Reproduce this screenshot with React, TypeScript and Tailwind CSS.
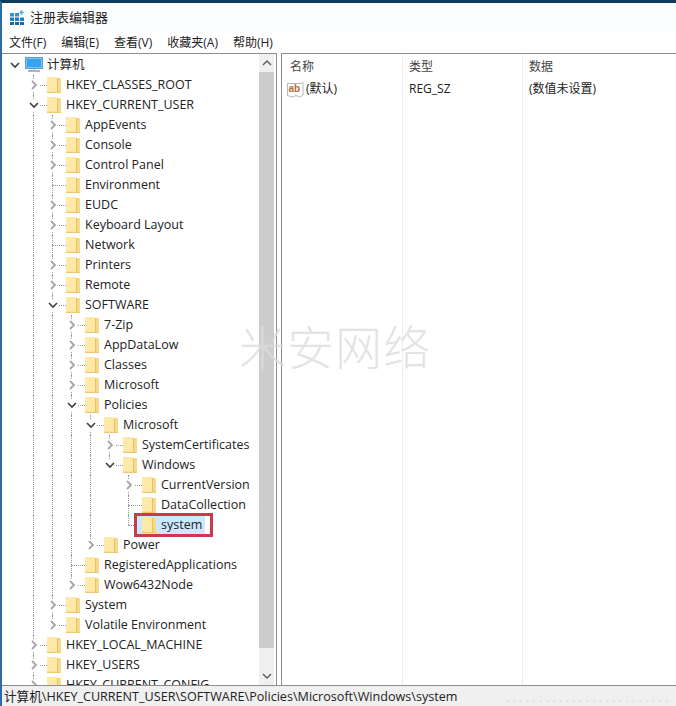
type TreeNode = {
  label: string;
  open?: boolean;
  leaf?: boolean;
  selected?: boolean;
  children?: TreeNode[];
};

const FONT = "font-['Open_Sans','Noto_Sans_CJK_SC',sans-serif]";

const closed = (label: string): TreeNode => ({ label });
const leaf = (label: string): TreeNode => ({ label, leaf: true });

const TREE: TreeNode[] = [
  closed("HKEY_CLASSES_ROOT"),
  {
    label: "HKEY_CURRENT_USER",
    open: true,
    children: [
      closed("AppEvents"),
      closed("Console"),
      closed("Control Panel"),
      leaf("Environment"),
      closed("EUDC"),
      closed("Keyboard Layout"),
      leaf("Network"),
      closed("Printers"),
      closed("Remote"),
      {
        label: "SOFTWARE",
        open: true,
        children: [
          closed("7-Zip"),
          closed("AppDataLow"),
          closed("Classes"),
          closed("Microsoft"),
          {
            label: "Policies",
            open: true,
            children: [
              {
                label: "Microsoft",
                open: true,
                children: [
                  closed("SystemCertificates"),
                  {
                    label: "Windows",
                    open: true,
                    children: [
                      closed("CurrentVersion"),
                      leaf("DataCollection"),
                      { label: "system", leaf: true, selected: true },
                    ],
                  },
                ],
              },
              closed("Power"),
            ],
          },
          leaf("RegisteredApplications"),
          closed("Wow6432Node"),
        ],
      },
      closed("System"),
      closed("Volatile Environment"),
    ],
  },
  closed("HKEY_LOCAL_MACHINE"),
  closed("HKEY_USERS"),
  closed("HKEY_CURRENT_CONFIG"),
];

function Chevron({ open }: { open?: boolean }) {
  return (
    <svg width="10" height="12" viewBox="0 0 10 12" fill="none" className="relative bg-white">
      {open ? (
        <path d="M1 4l4 4 4-4" stroke="#404040" strokeWidth="1.6" />
      ) : (
        <path d="M3 2l4 4-4 4" stroke="#a6a6a6" strokeWidth="1.8" />
      )}
    </svg>
  );
}

function Folder() {
  return (
    <svg width="14" height="16" viewBox="0 0 14 16" className="shrink-0">
      <path d="M0 0H10V1H13V15H0Z" fill="#fee9a8" />
      <path d="M10 1H14V16H0V14.5H10Z" fill="#f6d98a" />
      <path d="M10.5 1V15" stroke="#e8c268" />
      <path d="M0 15.5H14" stroke="#ecc873" />
    </svg>
  );
}

function ComputerIcon() {
  return (
    <svg width="18" height="16" viewBox="0 0 18 16" className="shrink-0">
      <rect x="0.5" y="0.5" width="17" height="11" fill="#7cc4f2" stroke="#5b9bc9" />
      <rect x="2" y="2" width="14" height="8" fill="#38a4ee" />
      <path d="M3 14h12" stroke="#8a9aa8" strokeWidth="1.5" />
      <path d="M8 12h2v2H8z" fill="#b8c4ce" />
    </svg>
  );
}

function RegeditIcon() {
  return (
    <svg width="15" height="15" viewBox="0 0 15 15" className="shrink-0">
      <path d="M0 3h4v3.5H0zM5 3h4v3.5H5z" fill="#2f93d6" />
      <path d="M0 7.5h4V11H0zM5 7.5h4V11H5zM10 7.5h4V11h-4z" fill="#1b7fc4" />
      <path d="M0 12h4v3H0zM5 12h4v3H5zM10 12h4v3h-4z" fill="#156aa8" />
      <path d="M11.5 0l2.5 2.5-2.5 2.5L9 2.5z" fill="#6fb4dc" />
    </svg>
  );
}

function AbIcon() {
  return (
    <svg width="17" height="17" viewBox="0 0 17 17" className="shrink-0">
      <path d="M0.5 2.5H13L16 1.5V14L13 16 9 14.5 5 16 0.5 14.5Z" fill="#fff" stroke="#b8b8b8" />
      <text x="1.5" y="11" fontSize="10" fontWeight="700" fill="#b5683a" fontFamily="'Liberation Sans', sans-serif">ab</text>
    </svg>
  );
}

// one 19px indent column holding the dotted guide lines
function Guide({ through, elbow, last, children }: { through?: boolean; elbow?: boolean; last?: boolean; children?: React.ReactNode }) {
  return (
    <div className="relative flex h-5 w-[19px] shrink-0 items-center justify-center">
      {through && <div className="absolute top-0 bottom-0 left-[9px] border-l border-dotted border-[#9a9a9a]" />}
      {elbow && (
        <>
          <div className={`absolute top-0 left-[9px] border-l border-dotted border-[#9a9a9a] ${last ? "h-[10px]" : "h-5"}`} />
          <div className="absolute top-[10px] left-[9px] w-[14px] border-t border-dotted border-[#9a9a9a]" />
        </>
      )}
      {children}
    </div>
  );
}

function Rows({ nodes, trail }: { nodes: TreeNode[]; trail: boolean[] }) {
  return (
    <>
      {nodes.map((node, i) => {
        const last = i === nodes.length - 1;
        const expandable = !node.leaf;
        return (
          <div key={`${trail.length}-${node.label}`}>
            <div className="relative flex h-5 items-center whitespace-nowrap">
              {trail.map((on, k) => (
                <Guide key={k} through={on} />
              ))}
              <Guide elbow last={last}>
                {expandable && <Chevron open={node.open} />}
              </Guide>
              {node.selected && <div className="absolute left-[132px] top-0 h-5 w-[68px] bg-[#cce8ff]" />}
              <div className="relative ml-1 mr-[5px]">
                <Folder />
              </div>
              <span className="relative text-[12.5px] leading-5 text-[#222]">{node.label}</span>
              {node.selected && (
                <div className="absolute left-[129px] top-[-2px] h-6 w-[79px] border-[3px] border-[#c93a4b]" />
              )}
            </div>
            {node.open && node.children && <Rows nodes={node.children} trail={[...trail, !last]} />}
          </div>
        );
      })}
    </>
  );
}

export default function App() {
  return (
    <div className={`${FONT} relative flex h-[706px] w-[676px] flex-col overflow-hidden border-t-[3px] border-l-2 border-t-[#0e3a5c] border-l-[#2a6ca3] bg-white`}>
      {/* title bar */}
      <div className="flex h-[30px] shrink-0 items-center gap-[5px] bg-[#fbfdfe] pb-[2px] pl-2 text-[13px] text-[#222]">
        <RegeditIcon />
        <span className="font-['Noto_Sans_CJK_SC',sans-serif]">注册表编辑器</span>
      </div>

      {/* menu */}
      <div className="flex h-5 shrink-0 items-center gap-[15px] pl-[7px] text-[12px] text-[#222]">
        <span>文件(F)</span>
        <span>编辑(E)</span>
        <span>查看(V)</span>
        <span>收藏夹(A)</span>
        <span>帮助(H)</span>
      </div>

      <div className="flex min-h-0 flex-1">
        {/* key tree */}
        <div className="flex w-[275px] shrink-0 border-t border-r border-[#8e8e8e]">
          <div className="min-w-0 flex-1 overflow-hidden pt-[1px] pl-[3px]">
            <div className="flex h-5 items-center whitespace-nowrap">
              <Guide>
                <Chevron open />
              </Guide>
              <div className="mr-[4px] ml-[1px]">
                <ComputerIcon />
              </div>
              <span className="text-[12.5px] leading-5 text-[#222]">计算机</span>
            </div>
            <Rows nodes={TREE} trail={[false]} />
          </div>
          {/* scrollbar */}
          <div className="mr-[2px] flex w-[15px] shrink-0 flex-col bg-[#f0f0f0]">
            <div className="flex h-[18px] shrink-0 items-center justify-center">
              <svg width="10" height="8" viewBox="0 0 10 8" fill="none">
                <path d="M1 6l4-4 4 4" stroke="#606060" strokeWidth="1.5" />
              </svg>
            </div>
            <div className="h-[576px] shrink-0 bg-[#cdcdcd]" />
            <div className="flex-1" />
            <div className="flex h-[18px] shrink-0 items-center justify-center">
              <svg width="10" height="8" viewBox="0 0 10 8" fill="none">
                <path d="M1 2l4 4 4-4" stroke="#606060" strokeWidth="1.5" />
              </svg>
            </div>
          </div>
        </div>

        <div className="w-1 shrink-0" />

        {/* values */}
        <div className="flex min-w-0 flex-1 border-t border-l border-[#8e8e8e] text-[12px] text-[#222]">
          <div className="w-[121px] shrink-0 border-r border-[#eeeeee]">
            <div className="flex h-[25px] items-center pl-2 text-[#444]">名称</div>
            <div className="flex h-5 items-center gap-[2px] pl-[5px]">
              <AbIcon />
              <span>(默认)</span>
            </div>
          </div>
          <div className="w-[120px] shrink-0 border-r border-[#eeeeee]">
            <div className="flex h-[25px] items-center pl-[6px] text-[#444]">类型</div>
            <div className="flex h-5 items-center pl-[6px]">REG_SZ</div>
          </div>
          <div className="flex-1">
            <div className="flex h-[25px] items-center pl-[6px] text-[#444]">数据</div>
            <div className="flex h-5 items-center pl-[6px]">(数值未设置)</div>
          </div>
        </div>
      </div>

      {/* status bar */}
      <div className="flex h-[21px] shrink-0 items-center justify-between overflow-hidden border-t border-[#8e8e8e] bg-[#f0f0f0] pt-[3px] pl-[2px] text-[12.6px] whitespace-nowrap text-[#222]">
        <span>计算机\HKEY_CURRENT_USER\SOFTWARE\Policies\Microsoft\Windows\system</span>
        <span aria-hidden="true" className="pr-1 text-[10px] leading-3 tracking-[4px] text-[#c8c8c8]">.........................</span>
      </div>

      {/* watermark */}
      <div className="pointer-events-none absolute top-[314px] left-[237px] font-['Noto_Sans_CJK_SC',sans-serif] text-[47px] leading-[56px] font-light tracking-[1px] text-[#dcdcdc]/80">
        米安网络
      </div>
    </div>
  );
}
